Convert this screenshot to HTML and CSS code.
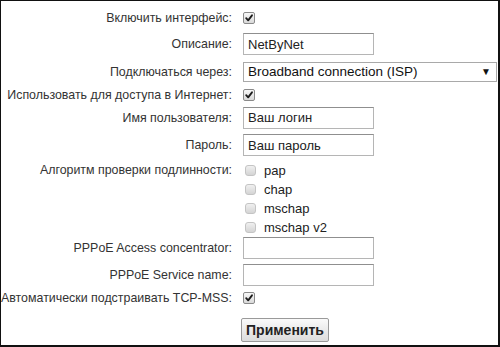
FILE: index.html
```html
<!DOCTYPE html>
<html>
<head>
    <title>PPPoE</title>
    <link rel="stylesheet" href="styles.css">
</head>
<body>
    <div class="frame">
        <form class="settings">
            <!-- interface -->
            <div class="row row-a">
                <label class="name">Включить интерфейс:</label>
                <div class="field"><span class="check on"><svg viewBox="0 0 12 12"><path d="M2.6 6.2 L5 8.8 L9.6 2.8" /></svg></span></div>
            </div>
            <div class="row row-b">
                <label class="name">Описание:</label>
                <div class="field"><input type="text" class="text" value="NetByNet"></div>
            </div>
            <div class="row row-b">
                <label class="name">Подключаться через:</label>
                <div class="field">
                    <div class="select">Broadband connection (ISP)<span class="arrow">&#9660;</span></div>
                </div>
            </div>
            <div class="row row-c">
                <label class="name">Использовать для доступа в Интернет:</label>
                <div class="field"><span class="check on"><svg viewBox="0 0 12 12"><path d="M2.6 6.2 L5 8.8 L9.6 2.8" /></svg></span></div>
            </div>
            <div class="row row-d">
                <label class="name">Имя пользователя:</label>
                <div class="field"><input type="text" class="text" value="Ваш логин"></div>
            </div>
            <div class="row row-b">
                <label class="name">Пароль:</label>
                <div class="field"><input type="text" class="text" value="Ваш пароль"></div>
            </div>

            <!-- auth -->
            <div class="row row-auth">
                <label class="name">Алгоритм проверки подлинности:</label>
                <div class="field list">
                    <div class="opt"><span class="check off"></span>pap</div>
                    <div class="opt"><span class="check off"></span>chap</div>
                    <div class="opt"><span class="check off"></span>mschap</div>
                    <div class="opt"><span class="check off"></span>mschap v2</div>
                </div>
            </div>

            <div class="row row-e">
                <label class="name">PPPoE Access concentrator:</label>
                <div class="field"><input type="text" class="text" value=""></div>
            </div>
            <div class="row row-f">
                <label class="name">PPPoE Service name:</label>
                <div class="field"><input type="text" class="text" value=""></div>
            </div>
            <div class="row row-g">
                <label class="name">Автоматически подстраивать TCP-MSS:</label>
                <div class="field"><span class="check on"><svg viewBox="0 0 12 12"><path d="M2.6 6.2 L5 8.8 L9.6 2.8" /></svg></span></div>
            </div>

            <div class="row row-btn">
                <span></span>
                <div class="field"><button type="button" class="apply">Применить</button></div>
            </div>
        </form>
    </div>
</body>
</html>
```

FILE: styles.css
```css
body {
    margin: 0;
    padding: 0;
    background-color: #fff;
    font-family: "Liberation Sans", Arial, sans-serif;
    font-size: 13px;
    color: #333;
}

.frame {
    box-sizing: border-box;
    width: 500px;
    height: 347px;
    border-style: solid;
    border-color: #111;
    border-width: 1px 2px 2px 1px;
    overflow: hidden;
}

.settings {
    padding-top: 5px;
}

.row {
    display: grid;
    grid-template-columns: 231px 1fr;
    column-gap: 11px;
    align-items: center;
}

.row-a { height: 24px; }
.row-b { height: 28px; }
.row-c { height: 18px; }
.row-d { height: 27px; }
.row-e { height: 22px; }
.row-f { height: 32px; }
.row-g { height: 14px; }

.row-auth {
    align-items: start;
    padding-top: 2px;
    height: 76px;
}

.row-auth .name {
    line-height: 19px;
}

.row-btn {
    margin-top: 13px;
}

.name {
    font-size: 12.4px;
    text-align: right;
    white-space: nowrap;
}

.field {
    display: flex;
    align-items: center;
}

.text {
    box-sizing: border-box;
    width: 131px;
    height: 22px;
    margin: 0;
    padding: 0 4px;
    border: 1px solid #b5b5b5;
    border-top-color: #8f8f8f;
    border-radius: 0;
    font-family: "Liberation Sans", Arial, sans-serif;
    font-size: 13px;
    color: #222;
    background: #fff;
}

.select {
    box-sizing: border-box;
    position: relative;
    width: 254px;
    height: 20px;
    line-height: 18px;
    padding-left: 4px;
    border: 1px solid #a9a9a9;
    color: #111;
    font-size: 13.5px;
    background: #fff;
}

.arrow {
    position: absolute;
    right: 5px;
    top: 0;
    font-size: 10px;
    color: #111;
}

.check {
    box-sizing: border-box;
    display: inline-block;
    width: 12px;
    height: 12px;
    border-radius: 2px;
}

.check.on {
    border: 1px solid #8a8a8a;
    background: linear-gradient(#f7f7f7, #d9d9d9);
}

.check svg {
    display: block;
    width: 10px;
    height: 10px;
}

.check svg path {
    fill: none;
    stroke: #1c1c1c;
    stroke-width: 2.2;
    stroke-linecap: round;
    stroke-linejoin: round;
}

.check.off {
    width: 11px;
    height: 11px;
    margin-left: 2px;
    margin-right: 8px;
    border: 1px solid #c4c4c4;
    border-radius: 3px;
    background: linear-gradient(#f0f0f0, #d4d4d4);
}

.list {
    display: block;
}

.opt {
    display: flex;
    align-items: center;
    height: 19px;
    color: #222;
}

.apply {
    box-sizing: border-box;
    width: 88px;
    height: 24px;
    margin-left: -2px;
    padding: 0;
    border: 1px solid #9a9a9a;
    border-radius: 2px;
    background: linear-gradient(#fafafa, #dcdcdc);
    font-family: "Liberation Sans", Arial, sans-serif;
    font-size: 14px;
    font-weight: bold;
    color: #222;
}
```
